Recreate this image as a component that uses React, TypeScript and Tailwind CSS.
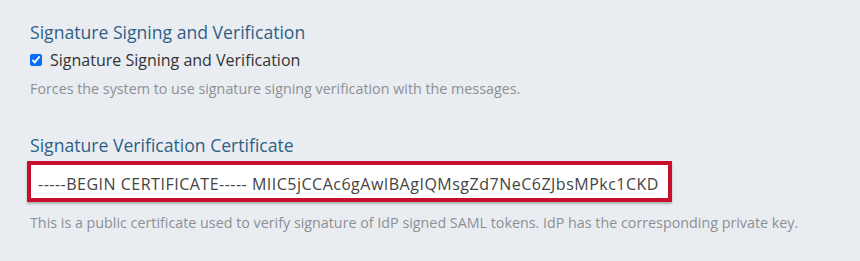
import React from "react";

export default function App() {
  return (
    <div
      className="w-[860px] h-[261px] bg-[#e9edf1] pl-[30px] pt-[20px]"
      style={{ fontFamily: "'Open Sans', Lato, sans-serif" }}
    >
      <h2 className="text-[17.6px] leading-[24px] text-[#2e5f86]">
        Signature Signing and Verification
      </h2>
      <label className="mt-[6px] flex items-center gap-[8px] text-[16px] leading-[20px] text-[#333]">
        <input type="checkbox" defaultChecked className="w-[12px] h-[12px] accent-[#0b6cf5] m-0" />
        Signature Signing and Verification
      </label>
      <p className="mt-[10px] text-[14.3px] leading-[18px] text-[#8c9094]">
        Forces the system to use signature signing verification with the messages.
      </p>
      <h2 className="mt-[35px] text-[17.6px] leading-[24px] text-[#2e5f86]">
        Signature Verification Certificate
      </h2>
      <div className="-ml-[3px] mt-[4px] w-[645px] h-[41px] border-[4px] border-[#c8102e] bg-white shadow-[0_2px_2px_rgba(0,0,0,0.25)] flex items-center pl-[7px] pt-[5px] text-[16px] tracking-[0.5px] text-[#444] whitespace-nowrap overflow-hidden">
        -----BEGIN CERTIFICATE----- MIIC5jCCAc6gAwIBAgIQMsgZd7NeC6ZJbsMPkc1CKD
      </div>
      <p className="mt-[12px] text-[14.3px] leading-[18px] text-[#8c9094]">
        This is a public certificate used to verify signature of IdP signed SAML tokens. IdP has the corresponding private key.
      </p>
    </div>
  );
}
